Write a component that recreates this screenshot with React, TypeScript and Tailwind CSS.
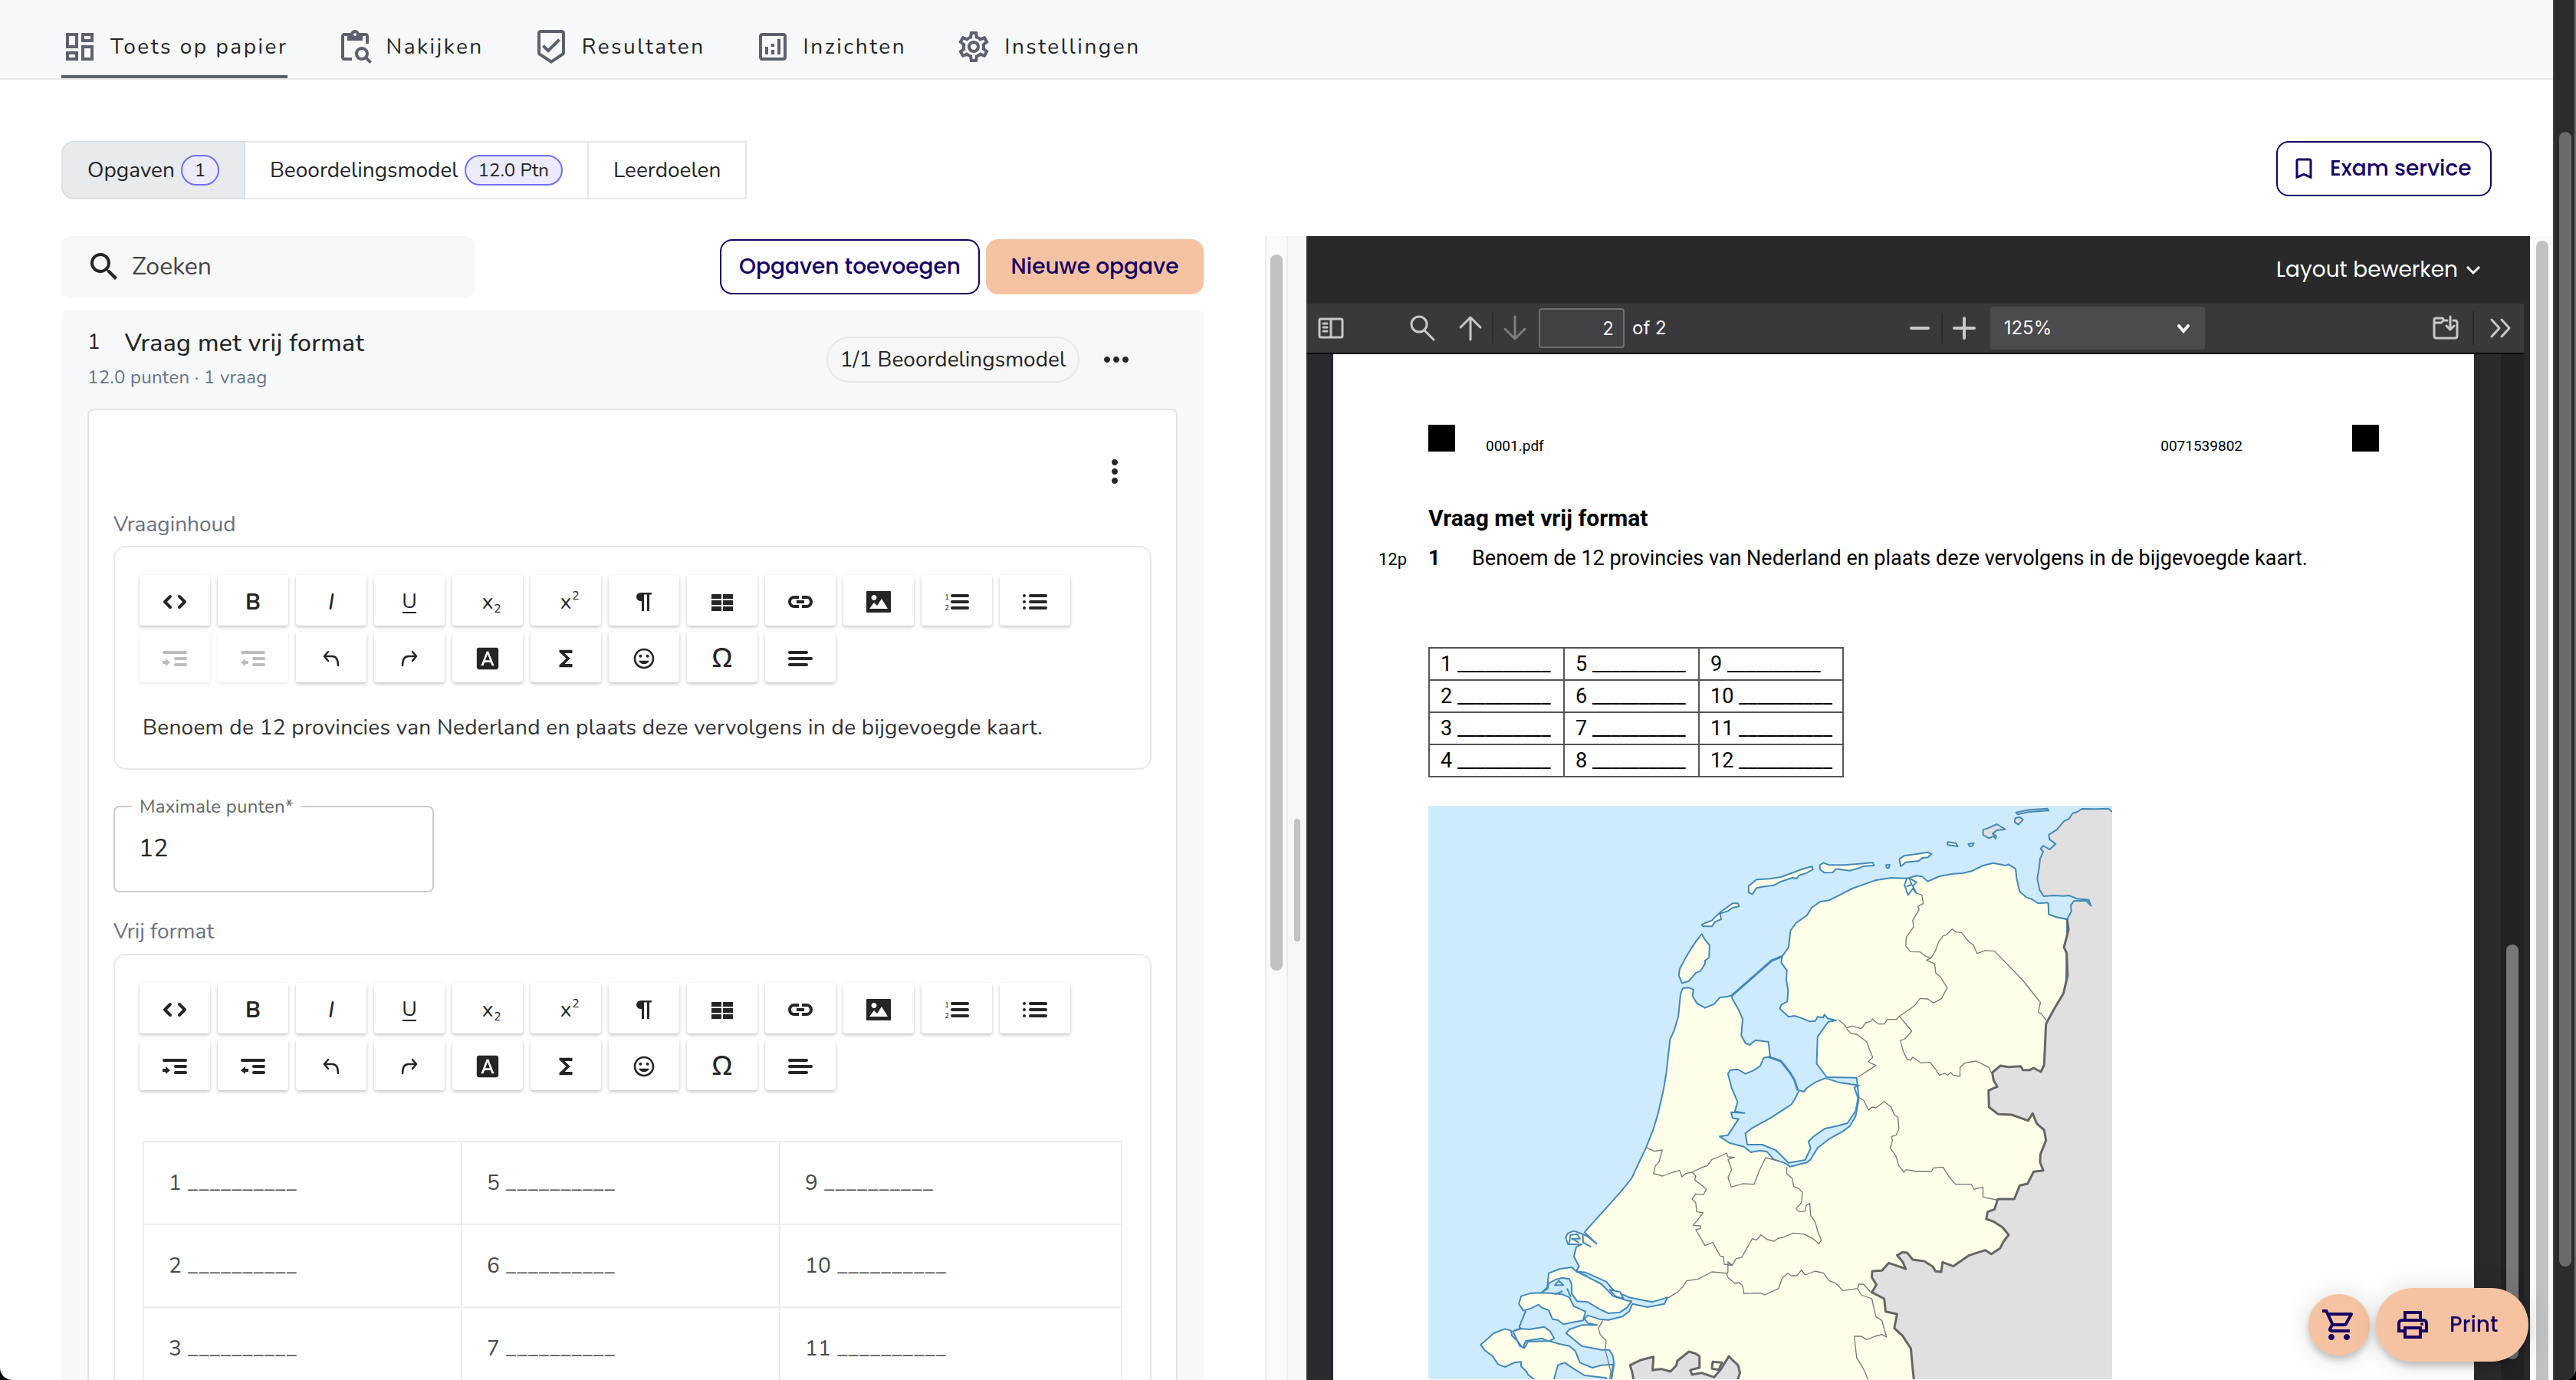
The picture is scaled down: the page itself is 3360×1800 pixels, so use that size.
import type { ReactNode } from "react";
import {
  MdBookmarkBorder,
  MdContentPasteSearch,
  MdFontDownload,
  MdFunctions,
  MdInsertEmoticon,
  MdMoreHoriz,
  MdMoreVert,
  MdOutlineAnalytics,
  MdOutlineBeenhere,
  MdOutlineDashboard,
  MdOutlinePrint,
  MdOutlineSettings,
  MdOutlineShoppingCart,
  MdSearch,
} from "react-icons/md";

const NAV = [
  { label: "Toets op papier", icon: MdOutlineDashboard, active: true },
  { label: "Nakijken", icon: MdContentPasteSearch },
  { label: "Resultaten", icon: MdOutlineBeenhere },
  { label: "Inzichten", icon: MdOutlineAnalytics },
  { label: "Instellingen", icon: MdOutlineSettings },
];

const BLANK = "__________";
const ANSWER_ROWS = [
  [1, 5, 9],
  [2, 6, 10],
  [3, 7, 11],
  [4, 8, 12],
];

const QUESTION = "Benoem de 12 provincies van Nederland en plaats deze vervolgens in de bijgevoegde kaart.";

// 48px drawing area with the origin in the middle
function Glyph({ children }: { children: ReactNode }) {
  return (
    <svg viewBox="-24 -24 48 48" className="size-12" fill="currentColor" aria-hidden="true">
      {children}
    </svg>
  );
}

function Stroke({ d, width = 4 }: { d: string; width?: number }) {
  return <path d={d} fill="none" stroke="currentColor" strokeWidth={width} strokeLinecap="round" strokeLinejoin="round" />;
}

const TOOLS: { name: string; icon: ReactNode }[] = [
  {
    name: "Code",
    icon: (
      <Glyph>
        <Stroke d="M-6 -7 L-13 0 L-6 7 M6 -7 L13 0 L6 7" width={4} />
      </Glyph>
    ),
  },
  { name: "Vet", icon: <Glyph><text y="10" textAnchor="middle" fontSize="29" fontWeight="700">B</text></Glyph> },
  { name: "Cursief", icon: <Glyph><text y="10" textAnchor="middle" fontSize="30" fontWeight="500" fontStyle="italic">I</text></Glyph> },
  {
    name: "Onderstrepen",
    icon: (
      <Glyph>
        <text y="8" textAnchor="middle" fontSize="27">U</text>
        <rect x="-9" y="13" width="18" height="2" />
      </Glyph>
    ),
  },
  {
    name: "Subscript",
    icon: (
      <Glyph>
        <text y="9" textAnchor="middle" fontSize="28">x</text>
        <text x="8" y="14" fontSize="16">2</text>
      </Glyph>
    ),
  },
  {
    name: "Superscript",
    icon: (
      <Glyph>
        <text y="9" textAnchor="middle" fontSize="28">x</text>
        <text x="8" y="-3" fontSize="16">2</text>
      </Glyph>
    ),
  },
  { name: "Alinea", icon: <Glyph><path d="M10 -12 H-4 a6 5.5 0 0 0 0 11 h1 V12 h3 V-9.5 h4 V12 h3 V-9.5 h3 z" /></Glyph> },
  {
    name: "Tabel",
    icon: <Glyph><path d="M-14 -10h13v6h-13z M1 -10h13v6h-13z M-14 -2h13v6h-13z M1 -2h13v6h-13z M-14 6h13v6h-13z M1 6h13v6h-13z" /></Glyph>,
  },
  {
    name: "Link",
    icon: (
      <Glyph>
        <path d="M-2 -6 H-8 a6 6 0 0 0 0 12 H-2 M2 -6 H8 a6 6 0 0 1 0 12 H2 M-5 0 H5" fill="none" stroke="currentColor" strokeWidth="4" />
      </Glyph>
    ),
  },
  {
    name: "Afbeelding",
    icon: (
      <Glyph>
        <path
          fillRule="evenodd"
          d="M-15 -14 h30 a1 1 0 0 1 1 1 v26 a1 1 0 0 1 -1 1 h-30 a1 1 0 0 1 -1 -1 v-26 a1 1 0 0 1 1 -1 z M-6 -9 a3.5 3.5 0 1 0 0.01 0 z M-12 9 h24 l-8 -13 l-6 9 l-4 -4 z"
        />
      </Glyph>
    ),
  },
  {
    name: "Genummerde lijst",
    icon: (
      <Glyph>
        <Stroke d="M-6 -8 H14 M-6 0 H14 M-6 8 H14" />
        <text x="-16" y="-3" fontSize="10">1</text>
        <text x="-16" y="11" fontSize="10">2</text>
      </Glyph>
    ),
  },
  {
    name: "Opsomming",
    icon: (
      <Glyph>
        <Stroke d="M-6 -8 H14 M-6 0 H14 M-6 8 H14 M-14 -8 h0.01 M-14 0 h0.01 M-14 8 h0.01" />
      </Glyph>
    ),
  },
  {
    name: "Inspringen",
    icon: (
      <Glyph>
        <Stroke d="M-14 -8 H14 M1 0 H14 M1 8 H14" />
        <path d="M-16 3 h4 v-3 l6 5 l-6 5 v-3 h-4 z" />
      </Glyph>
    ),
  },
  {
    name: "Uitspringen",
    icon: (
      <Glyph>
        <Stroke d="M-14 -8 H14 M1 0 H14 M1 8 H14" />
        <path d="M-6 3 h-4 v-3 l-6 5 l6 5 v-3 h4 z" />
      </Glyph>
    ),
  },
  { name: "Ongedaan maken", icon: <Glyph><Stroke d="M-4 -9 L-9 -3 L-4 3 M-9 -3 H1 Q9 -3 9 9" width={2.5} /></Glyph> },
  { name: "Opnieuw", icon: <Glyph><Stroke d="M4 -9 L9 -3 L4 3 M9 -3 H-1 Q-9 -3 -9 9" width={2.5} /></Glyph> },
  { name: "Tekstkleur", icon: <MdFontDownload className="size-[34px]" /> },
  { name: "Formule", icon: <MdFunctions className="size-[34px]" /> },
  { name: "Emoji", icon: <MdInsertEmoticon className="size-8" /> },
  { name: "Speciaal teken", icon: <Glyph><text y="11" textAnchor="middle" fontSize="34" fontWeight="600">Ω</text></Glyph> },
  { name: "Uitlijnen", icon: <Glyph><Stroke d="M-14 -8 H8 M-14 0 H14 M-14 8 H8" /></Glyph> },
];

function Toolbar({ disabled = [] }: { disabled?: string[] }) {
  return (
    <div className="flex flex-wrap gap-x-[10px] gap-y-2 px-8 pt-9">
      {TOOLS.map((tool) => (
        <button
          key={tool.name}
          type="button"
          aria-label={tool.name}
          disabled={disabled.includes(tool.name)}
          className="flex h-[66px] w-[92px] items-center justify-center rounded bg-white pt-[3px] text-[#252525] shadow-[0_2px_4px_rgba(0,0,0,0.24)] disabled:opacity-30"
        >
          {tool.icon}
        </button>
      ))}
    </div>
  );
}

function EditorPanel() {
  return (
    <section className="flex min-w-0 flex-col pl-20 pr-20">
      <div className="flex shrink-0 items-start gap-2">
        <label className="flex h-20 w-[539px] items-center gap-3 rounded-xl bg-[#f7f7f7] pl-8 text-[#252525]">
          <MdSearch className="size-12 shrink-0" />
          <input
            type="text"
            aria-label="Zoeken"
            placeholder="Zoeken"
            className="w-full min-w-0 bg-transparent text-[32px] outline-none placeholder:text-[#444]"
          />
        </label>
        <button
          type="button"
          className="ml-auto mt-1 h-[72px] w-[339px] rounded-2xl border-2 border-[#170064] font-[Poppins,Inter,sans-serif] text-[28px] font-medium text-[#170064]"
        >
          Opgaven toevoegen
        </button>
        <button
          type="button"
          className="mt-1 h-[72px] w-[284px] rounded-2xl bg-[#f6c3a2] font-[Poppins,Inter,sans-serif] text-[28px] font-medium text-[#170064]"
        >
          Nieuwe opgave
        </button>
      </div>

      <div className="mt-4 flex grow flex-col rounded-t-lg bg-[#f7f8fa] px-[34px] pt-6">
        <div className="flex h-[105px] items-start">
          <div>
            <div className="flex gap-8 text-[#252525]">
              <span className="text-[28px] leading-9">1</span>
              <h2 className="text-[32px] font-medium leading-10 tracking-[0.01em]">Vraag met vrij format</h2>
            </div>
            <p className="pt-2 text-2xl leading-8 tracking-[0.01em] text-[#64748b]">12.0 punten · 1 vraag</p>
          </div>
          <div className="ml-auto flex items-center gap-6 pr-14 pt-[11px] text-[#252525]">
            <span className="flex h-[60px] w-[330px] items-center justify-center rounded-full border-2 border-[#e8e8e8] bg-[#f7f7f7] text-[28px]">
              1/1 Beoordelingsmodel
            </span>
            <button type="button" aria-label="Meer opties">
              <MdMoreHoriz className="size-12" />
            </button>
          </div>
        </div>

        <div className="grow rounded-t-lg border-2 border-b-0 border-[#e3e4e6] bg-white px-8">
          <div className="flex justify-end pr-6 pt-14">
            <button type="button" aria-label="Vraagmenu" className="text-[#252525]">
              <MdMoreVert className="size-12" />
            </button>
          </div>

          <h3 className="pt-[26px] text-[28px] leading-[38px] text-[#6b7280]">Vraaginhoud</h3>
          <div className="mt-[9px] h-[292px] rounded-2xl border-2 border-[#e8e8e8]">
            <Toolbar disabled={["Inspringen", "Uitspringen"]} />
            <p className="px-9 pt-10 text-[28px] leading-[38px] tracking-[0.01em] text-[#333]">{QUESTION}</p>
          </div>

          <fieldset className="mt-[33px] h-[127px] w-[418px] rounded-lg border-2 border-[#ccc] px-[22px]">
            <legend className="px-[10px] text-2xl leading-[30px] tracking-[0.01em] text-[#666]">
              <label htmlFor="max-points">Maximale punten*</label>
            </legend>
            <input
              id="max-points"
              type="text"
              defaultValue="12"
              className="mt-1 block h-[70px] w-full bg-transparent px-[9px] text-[32px] text-[#252525] outline-none"
            />
          </fieldset>

          <h3 className="pt-8 text-[28px] leading-[38px] text-[#6b7280]">Vrij format</h3>
          <div className="mt-[10px] rounded-2xl border-2 border-[#e8e8e8] pb-10">
            <Toolbar />
            <div className="pl-9 pr-9 pt-[66px]">
              <table className="w-full table-fixed border-collapse text-[28px] tracking-[0.01em] text-[#484848]">
                <colgroup>
                  <col className="w-[415px]" />
                  <col className="w-[415px]" />
                  <col />
                </colgroup>
                <tbody>
                  {ANSWER_ROWS.slice(0, 3).map((row) => (
                    <tr key={row[0]} className="h-[108px]">
                      {row.map((n) => (
                        <td key={n} className="border-2 border-[#ececec] px-8">
                          {n} {BLANK}
                        </td>
                      ))}
                    </tr>
                  ))}
                </tbody>
              </table>
            </div>
          </div>
        </div>
      </div>
    </section>
  );
}

const PROVINCE_BORDERS = [
  "1100,378 1112,385 1115,418 1103,430 1106,442 1100,460 1092,485 1094,510 1078,550 1077,585 1087,607 1108,608 1120,625 1132,632",
  "1132,632 1141,605 1148,570 1158,545 1165,542 1178,518 1186,530 1198,532 1215,570 1224,580 1232,614 1250,602 1270,605 1300,660 1332,720 1365,795 1370,805 1365,845 1372,850 1384,880",
  "1132,632 1122,640 1140,655 1142,690 1152,705 1167,748 1155,790 1137,808 1125,792 1108,790 1095,820 1063,860 1056,872 1037,872 1030,890 1018,890 1010,880 1005,870 1000,880 990,885 980,908 960,898 948,905 942,890 930,873",
  "948,908 958,928 970,930 992,960 998,990 1005,1020 995,1038 1012,1052 973,1098",
  "1063,860 1090,918 1075,948 1065,955 1072,1000 1080,1028 1087,1032 1092,1020 1110,1042 1130,1040 1143,1070 1150,1090 1162,1083 1168,1090 1175,1080 1180,1090 1195,1095 1195,1060 1205,1043 1230,1035 1258,1060 1262,1080",
  "977,1180 985,1188 996,1227 1003,1215 1012,1218 1030,1193 1045,1215 1052,1245 1060,1255 1062,1300 1056,1325 1046,1330 1048,1345 1043,1375 1055,1405 1062,1445 1073,1470 1078,1460 1100,1467 1133,1467 1137,1453 1158,1450 1172,1490 1185,1517 1220,1517 1225,1537 1245,1528 1245,1568 1275,1578",
  "512,1373 530,1388 547,1383 540,1430 532,1445 528,1475 548,1485 570,1470 585,1463 590,1488 598,1475 612,1470 635,1450 645,1445 655,1420 670,1410 687,1395 690,1410 704,1412 690,1420 698,1460 690,1490 697,1528 722,1515 747,1517 758,1465 772,1413 800,1425",
  "612,1470 620,1485 618,1500 643,1535 637,1558 620,1555 612,1575 620,1590 622,1625 636,1628 625,1655 614,1678 630,1680 630,1690 620,1695 640,1757 657,1745 668,1780 673,1798 680,1800 682,1830 700,1835 690,1820 690,1860 687,1870",
  "690,1828 700,1832 708,1808 720,1803 743,1730 752,1735 762,1715 775,1733 790,1740 800,1728 810,1725 832,1708 855,1712 875,1730 888,1750 893,1735 885,1700 880,1665 870,1640 868,1592 860,1600 858,1622 845,1625 838,1612 850,1590 852,1550 845,1535 833,1525 830,1495 818,1475 818,1450",
  "558,1963 580,1940 592,1918 600,1895 625,1888 655,1860 687,1865 690,1882 705,1905 715,1902 722,1915 725,1945 760,1943 770,1950 800,1925 808,1885 820,1865 828,1875 840,1875 850,1853 858,1872 880,1857 898,1865 910,1895 925,1905 940,1933 972,1925 975,1908 985,1908 1000,1938",
  "972,1925 980,1950 1003,1965 1012,2035 1025,2050 1035,2115 1025,2105 1010,2112 992,2125 980,2112 965,2112 970,2195 985,2240 997,2290",
  "418,2050 408,2080 412,2105 425,2130 423,2165 428,2200 435,2250 432,2290",
];

const DUTCH_ISLANDS = [
  "633,538 621,565 610,595 595,640 585,675 583,700 590,730 605,722 620,690 630,683 640,655 640,642 649,630 650,582 640,560",
  "633,502 636,508 655,508 662,490 675,480 673,458 690,448 700,435 714,430 712,418 700,418 675,450 663,470 655,485 640,495",
  "752,325 745,335 735,350 735,375 743,382 752,358 770,352 790,347 805,333 830,318 840,320 845,308 860,300 875,285 873,273 850,285 805,315 780,322",
  "890,268 890,285 900,298 918,297 925,283 955,290 975,280 985,272 1008,270 1005,258 985,262 945,268 910,268 898,259",
  "1066,273 1063,245 1073,232 1100,225 1125,218 1133,225 1125,238 1113,240 1105,252 1077,257",
  "1034,268 1042,266 1040,280 1035,278",
  "1168,178 1186,182 1190,195 1168,189",
  "1213,185 1225,182 1222,193 1216,195",
];

const DELTA_ISLANDS = [
  "360,1858 350,1842 325,1848 300,1865 297,1920 285,1940 298,1925 300,1905 315,1890 330,1883 345,1888 350,1910 350,1945 362,1975 385,1978 410,2005 430,2022 455,2018 470,2000 480,1975 470,1972 440,1955 415,1908 385,1880",
  "285,1942 262,1943 240,1955 235,1985 245,2012 262,2002 278,1988 285,2000 300,2010 308,2045 320,2048 332,2065 350,2058 375,2050 380,2015 355,1995 345,1960 330,1948 305,1943",
  "222,2092 237,2082 258,2085 290,2075 303,2092 312,2120 300,2132 285,2120 250,2130 243,2158 232,2130",
  "205,2083 180,2100 162,2130 152,2145 160,2165 178,2190 190,2222 205,2232 225,2215 240,2212 240,2230 252,2250 255,2262 275,2290 310,2290 320,2225 335,2215 355,2240 378,2265 425,2275 428,2290 435,2290 440,2222 415,2225 395,2235 368,2215 358,2170 345,2150 325,2143 300,2130 255,2133 247,2158 237,2150 232,2130 220,2110 218,2090",
  "313,1912 322,1895 332,1912",
  "433,1930 455,1938 463,1965 445,1955",
];

const GERMAN_ISLANDS = [
  "1272,165 1268,155 1258,163 1245,150 1245,130 1258,122 1275,108 1293,128 1275,132 1266,145 1274,155",
  "1315,85 1325,80 1332,90 1322,110 1314,100",
  "1317,62 1345,52 1385,47 1388,55 1345,60 1320,70",
];

const EAST_COAST =
  "M1526 60 L1518 47 L1490 49 L1460 48 L1450 60 L1440 65 L1432 88 L1422 95 L1405 130 L1388 150 L1390 168 L1403 185 L1390 207 L1376 192 L1370 205 L1376 215 L1369 245 L1367 280 L1363 320 L1368 365 L1377 390 L1400 387 L1420 389 L1432 387 L1450 400 L1475 404 L1480 428 L1470 408 L1443 408 L1436 425 L1437 450 L1428 480";

const EAST_BORDER =
  "L1431 520 L1427 550 L1421 590 L1427 612 L1429 700 L1420 770 L1400 830 L1388 870 L1382 890 L1378 1050 L1371 1077 L1355 1062 L1347 1070 L1332 1070 L1327 1055 L1300 1058 L1283 1053 L1265 1080 L1268 1110 L1276 1135 L1257 1150 L1258 1215 L1278 1243 L1307 1245 L1343 1268 L1353 1240 L1362 1280 L1378 1305 L1382 1345 L1370 1400 L1369 1430 L1376 1463 L1355 1468 L1342 1515 L1325 1522 L1313 1575 L1277 1575 L1270 1615 L1255 1625 L1252 1653 L1268 1663 L1287 1685 L1301 1715 L1290 1740 L1282 1768 L1263 1790 L1250 1775 L1215 1795 L1180 1838 L1157 1822 L1154 1860 L1142 1858 L1135 1838 L1117 1818 L1092 1812 L1080 1785 L1070 1783 L1058 1795 L1070 1820 L1077 1848 L1040 1825 L1025 1855 L1004 1857 L1003 1880 L1013 1910 L1003 1940 L1030 1965 L1033 2015 L1058 2025 L1052 2080 L1070 2110 L1088 2160 L1091 2220 L1095 2290";

function NetherlandsMap() {
  return (
    <svg
      viewBox="38 36 1488 2244"
      preserveAspectRatio="none"
      className="mt-[37px] h-[748px] w-[892px] bg-[#ceebfe] [&_*]:[vector-effect:non-scaling-stroke]"
      role="img"
      aria-label="Kaart van Nederland"
      strokeLinejoin="round"
    >
      <g fill="#ffffe9" stroke="#4389b8" strokeWidth="2">
        <polygon points="1428,480 1405,472 1388,460 1387,415 1365,418 1352,402 1340,395 1325,372 1318,320 1316,283 1300,265 1295,270 1267,260 1245,270 1220,292 1200,300 1180,302 1150,312 1125,332 1112,313 1100,310 1080,320 1045,318 1010,328 990,341 960,360 930,388 910,406 890,412 872,435 862,465 838,495 826,525 822,590 808,625 800,635 785,642 699,778 690,782 672,787 660,812 640,827 622,808 613,780 615,755 605,748 592,750 587,770 582,860 573,915 564,950 556,1080 550,1145 538,1240 528,1300 512,1373 480,1495 455,1550 430,1600 385,1690 378,1705 404,1750 385,1722 374,1712 355,1700 342,1708 337,1725 342,1752 372,1752 360,1762 355,1800 366,1838 360,1858 380,1862 425,1898 440,1930 475,1960 525,1978 558,1960 552,1985 515,1998 482,1985 475,2015 460,2035 430,2048 410,2045 385,2030 378,2045 385,2060 405,2068 372,2068 345,2085 338,2100 365,2140 372,2150 415,2165 432,2165 440,2190 442,2222 435,2300 1300,2300 1300,1800 1420,1300" />
        {DUTCH_ISLANDS.concat(DELTA_ISLANDS).map((points) => (
          <polygon key={points} points={points} />
        ))}
        <path
          fill="#ceebfe"
          d="M808 625 L806 650 L818 680 L817 720 L821 760 L819 802 L806 815 L803 830 L812 845 L822 862 L835 858 L852 868 L868 880 L880 878 L885 862 L897 865 L900 853 L907 868 L925 876 L908 882 L885 940 L883 1045 L905 1098 L970 1100 L972 1130 L975 1180 L968 1250 L955 1290 L940 1310 L910 1340 L885 1375 L870 1420 L862 1432 L825 1448 L815 1435 L790 1420 L775 1390 L760 1385 L740 1392 L725 1370 L693 1355 L672 1330 L690 1325 L713 1262 L700 1258 L697 1235 L726 1238 L705 1232 L711 1195 L698 1140 L690 1085 L695 1070 L712 1068 L728 1085 L745 1072 L760 1055 L768 1022 L782 1018 L778 960 L750 953 L737 972 L728 965 L719 935 L722 870 L712 830 L699 790 L699 778 L785 642 Z"
        />
        <polygon points="902,1102 880,1118 862,1140 855,1155 845,1150 835,1185 828,1205 785,1255 742,1298 728,1318 732,1362 765,1362 795,1385 822,1433 858,1422 870,1375 865,1350 875,1332 900,1300 930,1288 950,1278 968,1230 973,1180 965,1138 975,1130 935,1120" />
        <path fill="none" strokeWidth="3" d="M808 625 L785 642 L699 778 M778 1018 L805 1035 L825 1080 L835 1110 L842 1150" />
        <path fill="none" d="M1080 318 L1074 345 L1082 385 L1092 360 L1100 378 L1092 350 L1100 335 L1084 318 L1090 345 L1078 352 M345 1748 L347 1715 L362 1712 L368 1730 L350 1730 L366 1745 M374 1712 L375 1745 L392 1762 M360 1858 L385 1878 M222 2092 L240 2082 L236 2075 L250 2012 M340 1925 L348 1958 M313 1948 L330 1935" />
      </g>
      <g fill="none" stroke="#777" strokeWidth="1.3">
        {PROVINCE_BORDERS.map((points) => (
          <polyline key={points} points={points} />
        ))}
      </g>
      <path d={`${EAST_COAST} ${EAST_BORDER} L1526 2290 Z`} fill="#e0e0e0" />
      <path d="M1437 410 L1470 408 L1480 428 L1474 402 L1450 398 L1436 390 L1385 390 L1387 460 L1428 480 L1437 450 Z" fill="#ceebfe" />
      <path d={EAST_COAST} fill="none" stroke="#4389b8" strokeWidth="2" />
      <path d="M1387 415 L1388 460 L1405 472 L1428 480" fill="none" stroke="#4389b8" strokeWidth="2" />
      <g fill="#e0e0e0" stroke="#4389b8" strokeWidth="2">
        {GERMAN_ISLANDS.map((points) => (
          <polygon key={points} points={points} />
        ))}
      </g>
      <g stroke="#666" strokeWidth="3">
        <path d={`M1428 480 ${EAST_BORDER}`} fill="none" />
        <polygon
          fill="#e0e0e0"
          points="485,2290 482,2255 477,2225 500,2205 528,2192 526,2245 535,2242 545,2240 565,2250 578,2225 580,2208 605,2172 620,2180 628,2190 628,2235 612,2242 608,2245 612,2262 632,2255 660,2272 675,2240 692,2190 700,2205 712,2225 716,2255 710,2290"
        />
        <polygon fill="#ffffe9" points="657,2212 677,2215 670,2243 655,2238" />
      </g>
    </svg>
  );
}

function PdfIcon({ d, label, width = 3, dim = false }: { d: string; label: string; width?: number; dim?: boolean }) {
  return (
    <button type="button" aria-label={label} disabled={dim} className="text-[#c8c8ca] disabled:text-[#7d7d80]">
      <svg viewBox="0 0 36 36" className="size-9" fill="none" stroke="currentColor" strokeWidth={width} strokeLinecap="round" strokeLinejoin="round">
        <path d={d} />
      </svg>
    </button>
  );
}

function PdfToolbar() {
  return (
    <div className="mr-2 flex h-[66px] shrink-0 items-center border-b-2 border-[#0c0c0d] bg-[#38383d] pl-[14px] pr-3 font-[Inter,sans-serif] text-2xl text-[#f9f9fa]">
      <PdfIcon label="Zijbalk" width={3} d="M5 6 H31 Q33 6 33 8 V28 Q33 30 31 30 H5 Q3 30 3 28 V8 Q3 6 5 6 Z M18 6 V30 M8 12 H13 M8 17 H13 M8 22 H13" />
      <div className="ml-[84px] flex items-center gap-[26px]">
        <PdfIcon label="Zoeken in document" d="M13 3 a10 10 0 1 1 0 20 a10 10 0 1 1 0 -20 M20 21 L32 33" />
        <div className="flex items-center gap-[10px]">
          <PdfIcon label="Vorige pagina" d="M18 33 V4 M5 17 L18 4 L31 17" />
          <span className="h-10 w-0.5 bg-[#2a2a2e]" />
          <PdfIcon label="Volgende pagina" dim d="M18 3 V32 M5 19 L18 32 L31 19" />
        </div>
      </div>
      <input
        type="text"
        aria-label="Pagina"
        defaultValue="2"
        className="ml-[13px] h-[52px] w-28 rounded border-2 border-[#6f6f73] bg-[#404045] pr-3 text-right"
      />
      <span className="pl-[10px]">of 2</span>
      <div className="ml-[312px] flex items-center gap-[10px]">
        <PdfIcon label="Uitzoomen" width={4} d="M7 18 H29" />
        <span className="h-10 w-0.5 bg-[#2a2a2e]" />
        <PdfIcon label="Inzoomen" width={4} d="M5 18 H31 M18 5 V31" />
        <div className="relative ml-[6px]">
          <select
            aria-label="Zoomniveau"
            className="block h-14 w-[280px] appearance-none rounded bg-[#4a4a4f] pl-[18px] text-2xl"
          >
            <option>125%</option>
          </select>
          <svg viewBox="0 0 16 12" className="pointer-events-none absolute right-5 top-[23px] h-3 w-4" fill="none" stroke="currentColor" strokeWidth="4" strokeLinecap="round">
            <path d="M2 2 L8 9 L14 2" />
          </svg>
        </div>
      </div>
      <div className="ml-auto flex items-center gap-[17px]">
        <PdfIcon label="Opslaan" d="M20 8 H16 L14 5 H5 Q3 5 3 7 V28 Q3 31 6 31 H30 Q33 31 33 28 V11 Q33 8 30 8 H28 M3 11 H12 L15 8 M24 3 V20 M19 15 L24 20 L29 15" />
        <span className="h-11 w-0.5 bg-[#2a2a2e]" />
        <PdfIcon label="Meer gereedschap" d="M6 7 L16 18 L6 29 M19 7 L29 18 L19 29" />
      </div>
    </div>
  );
}

function PdfPage() {
  return (
    <div className="ml-[35px] grow bg-white font-[Roboto,sans-serif] text-black">
      <div className="flex items-start pl-[124px] pr-[124px] pt-[92px]">
        <span className="size-[35px] bg-black" />
        <span className="pl-10 pt-4 text-[19px] leading-6">0001.pdf</span>
        <span className="ml-auto pr-[143px] pt-4 text-[19px] leading-6">0071539802</span>
        <span className="size-[35px] bg-black" />
      </div>
      <h2 className="pl-[124px] pt-[65px] text-[30px] font-bold leading-[34px]">Vraag met vrij format</h2>
      <div className="flex items-baseline pt-[18px] text-[27px] leading-[34px]">
        <span className="w-[96px] text-right text-[22px]">12p</span>
        <span className="w-[85px] pl-7 font-bold">1</span>
        <span className="whitespace-nowrap">{QUESTION}</span>
      </div>
      <div className="pl-[124px] pt-[97px]">
        <table className="border-collapse text-[27px] leading-8">
          <tbody>
            {ANSWER_ROWS.map((row) => (
              <tr key={row[0]} className="h-[42px]">
                {row.map((n) => (
                  <td key={n} className="w-[176px] border-2 border-[#555] pl-[14px] last:w-[188px]">
                    {n} {BLANK}
                  </td>
                ))}
              </tr>
            ))}
          </tbody>
        </table>
        <NetherlandsMap />
      </div>
    </div>
  );
}

function PdfPanel() {
  return (
    <section className="flex min-w-0 flex-col overflow-hidden bg-[#292929]">
      <div className="flex h-[88px] shrink-0 items-center justify-end pr-16">
        <button type="button" className="flex items-center gap-[10px] font-[Poppins,Inter,sans-serif] text-[28px] text-white">
          Layout bewerken
          <svg viewBox="0 0 20 20" className="size-5" fill="none" stroke="currentColor" strokeWidth="3">
            <path d="M2 6 L10 14 L18 6" />
          </svg>
        </button>
      </div>
      <PdfToolbar />
      <div className="mr-2 flex min-h-0 grow overflow-hidden bg-[#2a2a2e]">
        <PdfPage />
        <div className="w-[35px]" />
        <div className="flex w-[30px] flex-col items-center bg-[#222226] pb-[27px]">
          <div className="mt-auto h-[541px] w-4 rounded-full bg-[#777779]" />
        </div>
      </div>
    </section>
  );
}

export default function App() {
  return (
    <div className="h-screen bg-black font-['Nunito','Open_Sans',sans-serif]">
      <div className="flex h-full overflow-hidden rounded-b-2xl bg-white">
        <main className="flex min-w-0 grow flex-col">
          <nav className="flex h-[104px] shrink-0 items-stretch gap-16 border-b-2 border-[#e8e8e8] bg-[#f7f8fa] pl-20 text-[28px] tracking-[0.09em] text-[#252525]">
            {NAV.map(({ label, icon: Icon, active }) => (
              <a
                key={label}
                href="#"
                className={`flex items-center gap-4 border-b-4 pt-6 ${active ? "border-[#5b616d]" : "border-transparent"}`}
              >
                <Icon className="size-12 text-[#5b616d]" />
                {label}
              </a>
            ))}
          </nav>

          <div className="flex shrink-0 items-start justify-between pb-12 pl-20 pr-20 pt-20">
            <div className="flex h-[76px] text-[28px] text-[#252525]">
              <button type="button" className="flex items-center gap-2 rounded-l-2xl border-2 border-[#d9dfe4] bg-[#e7ebee] px-8">
                Opgaven
                <span className="flex h-10 w-[50px] items-center justify-center rounded-full border-2 border-[#7070f4] bg-[#ecebfd] text-2xl">1</span>
              </button>
              <button type="button" className="flex items-center gap-2 border-y-2 border-r-2 border-[#e8e8e8] px-8">
                Beoordelingsmodel
                <span className="flex h-10 items-center rounded-full border-2 border-[#7070f4] bg-[#ecebfd] px-4 text-2xl">12.0 Ptn</span>
              </button>
              <button type="button" className="border-y-2 border-r-2 border-[#e8e8e8] px-8">
                Leerdoelen
              </button>
            </div>
            <button
              type="button"
              className="flex h-[72px] w-[281px] items-center gap-4 rounded-2xl border-2 border-[#170064] pl-4 font-[Poppins,Inter,sans-serif] text-[28px] font-medium text-[#170064]"
            >
              <MdBookmarkBorder className="size-9" />
              Exam service
            </button>
          </div>

          <div className="grid min-h-0 grow grid-cols-[minmax(0,1650fr)_30px_24px_minmax(0,1596fr)_30px] grid-rows-[minmax(0,1fr)] overflow-hidden">
            <EditorPanel />
            <div className="border-x-2 border-[#ececec] bg-[#fafafa] pt-6">
              <div className="mx-auto h-[934px] w-4 rounded-full bg-[#c1c1c1]" />
            </div>
            <div className="flex items-center justify-center bg-[#f7f7f7] pt-[188px]">
              <div className="h-40 w-2 rounded-full bg-[#c1c1c1]" />
            </div>
            <PdfPanel />
            <div className="bg-[#fafafa] pl-2 pt-[6px]">
              <div className="h-full w-4 rounded-t-full bg-[#c1c1c1]" />
            </div>
          </div>
        </main>

        {/* window scrollbar */}
        <div className="w-[30px] shrink-0 border-l-2 border-r-2 border-l-[#404040] border-r-[#6b6b6b] bg-[#2c2c2c] pl-[6px] pt-[172px]">
          <div className="h-[1480px] w-4 rounded-full bg-[#6b6b6b]" />
        </div>
      </div>

      <div className="fixed bottom-6 right-[62px] flex items-center gap-2 text-[#170064]">
        <button
          type="button"
          aria-label="Winkelwagen"
          className="flex size-20 items-center justify-center rounded-full bg-[#f6c3a2] shadow-[0_6px_10px_rgba(0,0,0,0.2),0_2px_36px_rgba(0,0,0,0.14)]"
        >
          <MdOutlineShoppingCart className="size-12" />
        </button>
        <button
          type="button"
          className="flex h-24 w-[199px] items-center gap-6 rounded-full bg-[#f6c3a2] pl-6 font-[Poppins,Inter,sans-serif] text-[28px] font-medium shadow-[0_6px_10px_rgba(0,0,0,0.2),0_2px_36px_rgba(0,0,0,0.14)]"
        >
          <MdOutlinePrint className="size-12" />
          Print
        </button>
      </div>
    </div>
  );
}
